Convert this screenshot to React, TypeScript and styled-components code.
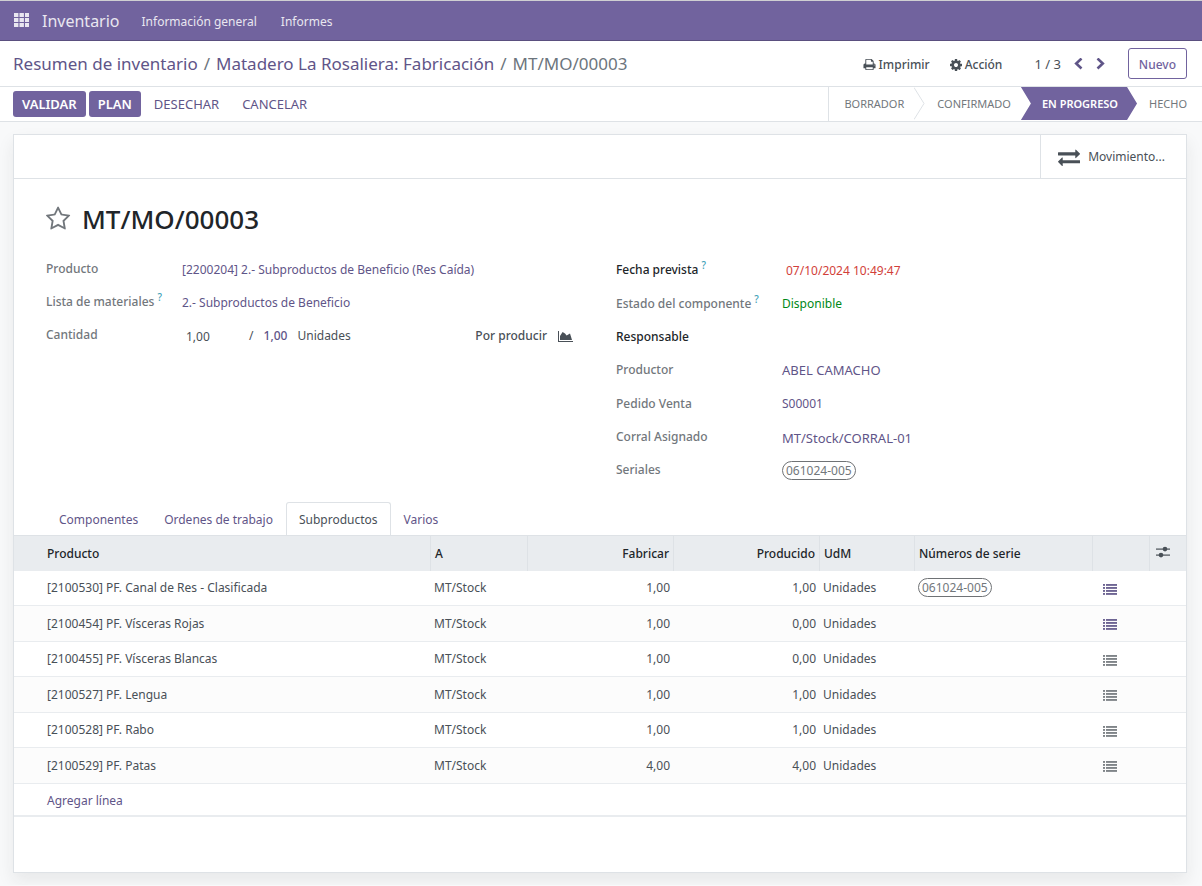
import React, { useState } from "react";
import styled, { createGlobalStyle, css } from "styled-components";

const color = {
  brand: "#71639e",
  brandDark: "#5a4f7f",
  link: "#5f5588",
  text: "#495057",
  dark: "#212529",
  muted: "#72777c",
  line: "#dee2e6",
  head: "#e9ecef",
  page: "#f8f9fa",
};

const GlobalStyle = createGlobalStyle`
  * { box-sizing: border-box; }
  html, body { margin: 0; min-height: 100%; background: ${color.page}; }
  body {
    font-family: "Noto Sans", "Open Sans", sans-serif;
    font-size: 12px;
    line-height: 20px;
    color: ${color.text};
  }
  button, input { font: inherit; color: inherit; }
  button { background: none; border: 0; padding: 0; cursor: pointer; white-space: nowrap; }
  a { color: ${color.link}; text-decoration: none; }
`;

/* ---------- icons ---------- */

const Glyph = styled.svg<{ $w?: number; $h?: number }>`
  display: block;
  flex: none;
  width: ${(p) => p.$w ?? 14}px;
  height: ${(p) => p.$h ?? p.$w ?? 14}px;
  fill: currentColor;
`;

const AppsIcon = () => (
  <Glyph $w={15} $h={14} viewBox="0 0 15 14" aria-hidden="true">
    {[0, 5, 10].map((y) =>
      [0, 5.5, 11].map((x) => <rect key={`${x}-${y}`} x={x} y={y} width="4.4" height="4" />)
    )}
  </Glyph>
);

const PrintIcon = () => (
  <Glyph $w={13} viewBox="0 0 1792 1792" aria-hidden="true">
    <path d="M448 1536h896v-256h-896v256zm0-640h896v-384h-160q-40 0-68-28t-28-68v-160h-640v640zm1152 64q0-26-19-45t-45-19-45 19-19 45 19 45 45 19 45-19 19-45zm128 0v416q0 13-9.5 22.5t-22.5 9.5h-224v160q0 40-28 68t-68 28h-960q-40 0-68-28t-28-68v-160h-224q-13 0-22.5-9.5t-9.5-22.5v-416q0-79 56.5-135.5t135.5-56.5h64v-544q0-40 28-68t68-28h672q40 0 88 20t76 48l152 152q28 28 48 76t20 88v256h64q79 0 135.5 56.5t56.5 135.5z" />
  </Glyph>
);

const CogIcon = () => (
  <Glyph $w={12} viewBox="128 128 1536 1536" aria-hidden="true">
    <path d="M1152 896q0-106-75-181t-181-75-181 75-75 181 75 181 181 75 181-75 75-181zm512-109v222q0 12-8 23t-20 13l-185 28q-19 54-39 91 35 50 107 138 10 12 10 25t-9 23q-27 37-99 108t-94 71q-12 0-26-9l-138-108q-44 23-91 38-16 136-29 186-7 28-36 28h-222q-14 0-24.5-8.5t-11.5-21.5l-28-184q-49-16-90-37l-141 107q-10 9-25 9-14 0-25-11-126-114-165-168-7-10-7-23 0-12 8-23 15-21 51-66.5t54-70.5q-27-50-41-99l-183-27q-13-2-21-12.5t-8-23.5v-222q0-12 8-23t19-13l186-28q14-46 39-92-40-57-107-138-10-12-10-24 0-10 9-23 26-36 98.5-107.5t94.5-71.5q13 0 26 10l138 107q44-23 91-38 16-136 29-186 7-28 36-28h222q14 0 24.5 8.5t11.5 21.5l28 184q49 16 90 37l142-107q9-9 24-9 13 0 25 10 129 119 165 170 7 8 7 22 0 12-8 23-15 21-51 66.5t-54 70.5q26 50 41 98l183 28q13 2 21 12.5t8 23.5z" />
  </Glyph>
);

const ChevronIcon = ({ right }: { right?: boolean }) => (
  <Glyph $w={9} $h={12} viewBox="0 0 9 12" aria-hidden="true">
    <path
      d={right ? "M1.5 0.5 L6.8 5.5 L1.5 10.5" : "M7.5 0.5 L2.2 5.5 L7.5 10.5"}
      fill="none"
      stroke="currentColor"
      strokeWidth="2.6"
    />
  </Glyph>
);

const ExchangeIcon = () => (
  <Glyph $w={22} viewBox="0 0 1792 1792" aria-hidden="true">
    <path d="M1792 1184v192q0 13-9.5 22.5t-22.5 9.5h-1376v192q0 13-9.5 22.5t-22.5 9.5q-12 0-24-10l-319-320q-9-9-9-22 0-14 9-23l320-320q9-9 23-9 13 0 22.5 9.5t9.5 22.5v192h1376q13 0 22.5 9.5t9.5 22.5zm0-544q0 14-9 23l-320 320q-9 9-23 9-13 0-22.5-9.5t-9.5-22.5v-192h-1376q-13 0-22.5-9.5t-9.5-22.5v-192q0-13 9.5-22.5t22.5-9.5h1376v-192q0-14 9-23t23-9q12 0 24 10l319 319q9 9 9 23z" />
  </Glyph>
);

const StarIcon = () => (
  <Glyph $w={26} viewBox="64 0 1792 1792" aria-hidden="true">
    <path d="M1201 1004l306-297-422-62-189-382-189 382-422 62 306 297-73 421 378-199 377 199zm527-357q0 22-26 48l-363 354 86 500q1 7 1 20 0 50-41 50-19 0-40-12l-449-236-449 236q-22 12-40 12-21 0-31.5-14.5t-10.5-35.5q0-6 2-20l86-500-364-354q-25-27-25-48 0-37 56-46l502-73 225-455q19-41 49-41t49 41l225 455 502 73q56 9 56 46z" />
  </Glyph>
);

const ForecastIcon = () => (
  <Glyph $w={15} $h={12} viewBox="0 0 15 12" aria-hidden="true">
    <path d="M0 1h1v10h14v1H0z M2 10V6l2.6-4 2.4 1.6L8.6 5.6 12 3.4 14 10z" />
  </Glyph>
);

const ListIcon = () => (
  <Glyph $w={14} $h={11} viewBox="0 0 14 11" aria-hidden="true">
    {[0, 3, 6, 9].map((y) => (
      <React.Fragment key={y}>
        <rect x="0" y={y + 0.1} width="2" height="1.7" />
        <rect x="3" y={y + 0.1} width="11" height="1.7" />
      </React.Fragment>
    ))}
  </Glyph>
);

const SlidersIcon = () => (
  <Glyph $w={14} $h={12} viewBox="0 0 14 12" aria-hidden="true">
    <rect y="2.5" width="14" height="1.2" />
    <rect y="8.5" width="14" height="1.2" />
    <circle cx="9" cy="3.1" r="2.3" />
    <circle cx="5" cy="9.1" r="2.3" />
  </Glyph>
);

/* ---------- top bars ---------- */

const Navbar = styled.nav`
  display: flex;
  align-items: center;
  height: 41px;
  padding: 0 14px;
  background: ${color.brand};
  border-top: 1px solid #cfcfd2;
  border-bottom: 1px solid ${color.brandDark};
  color: #e9e7f0;
`;

const NavButton = styled.button`
  margin-right: 13px;
  padding-bottom: 2px;
`;

const AppName = styled.a`
  margin-right: 22px;
  font-size: 16px;
  color: inherit;
`;

const NavLink = styled.a`
  margin-right: 24px;
  padding-top: 2px;
  color: inherit;
`;

const ControlPanel = styled.header`
  display: flex;
  align-items: center;
  justify-content: space-between;
  height: 46px;
  padding: 0 15px 0 13px;
  background: #fff;
  border-bottom: 1px solid ${color.line};
`;

const Breadcrumb = styled.ol`
  display: flex;
  margin: 0;
  padding: 0;
  list-style: none;
  font-size: 17px;
  line-height: 24px;
  white-space: nowrap;
  color: #6c757d;

  li + li::before {
    content: "/";
    padding: 0 6px;
  }
`;

const PanelTools = styled.div`
  display: flex;
  align-items: center;
`;

const ToolButton = styled.button`
  display: flex;
  align-items: center;
  gap: 3px;
  margin-right: 20px;
  padding-top: 2px;
  font-weight: 500;
`;

const Pager = styled.div`
  display: flex;
  align-items: center;
  margin: 0 23px 0 12px;
  font-size: 13px;
`;

const PagerButton = styled.button`
  margin-left: 13px;
  color: ${color.link};
`;

const NewButton = styled.button`
  height: 31px;
  padding: 2px 10px 0;
  border: 1px solid ${color.brand};
  border-radius: 3px;
  font-weight: 500;
  color: ${color.brand};
`;

const StatusBar = styled.section`
  display: flex;
  align-items: center;
  justify-content: space-between;
  height: 35px;
  padding-left: 13px;
  background: #fff;
  border-bottom: 1px solid ${color.line};
`;

const Actions = styled.div`
  display: flex;
  gap: 3px;
`;

const ActionButton = styled.button<{ $primary?: boolean }>`
  height: 26px;
  padding: 0 10px;
  border-radius: 3px;
  font-size: 13px;
  text-transform: uppercase;
  color: ${color.link};
  ${(p) =>
    p.$primary &&
    css`
      padding: 0 9px;
      background: ${color.brand};
      color: #fff;
      font-weight: 600;
    `}
`;

const Steps = styled.div`
  display: flex;
  align-self: stretch;
  border-left: 1px solid ${color.line};
`;

const Step = styled.button<{ $current?: boolean }>`
  height: 33px;
  padding: 0 10px 0 12px;
  font-size: 11px;
  text-transform: uppercase;
  color: ${color.muted};
  &:first-child { padding-left: 15px; }
  &:last-child { padding-right: 15px; }
  ${(p) =>
    p.$current &&
    css`
      padding: 0 19px 0 21px;
      background: ${color.brand};
      color: #fff;
      font-weight: 600;
      clip-path: polygon(0 0, calc(100% - 10px) 0, 100% 50%, calc(100% - 10px) 100%, 0 100%, 10px 50%);
    `}
`;

const StepEdge = () => (
  <Glyph $w={11} $h={33} viewBox="0 0 11 33" aria-hidden="true">
    <path d="M0 0.5 L10 16.5 L0 32.5" fill="none" stroke={color.line} />
  </Glyph>
);

/* ---------- sheet ---------- */

const Sheet = styled.main`
  margin: 12px 15px 12px 13px;
  padding-bottom: 55px;
  background: #fff;
  border: 1px solid ${color.line};
  box-shadow: 0 8px 16px rgba(33, 37, 41, 0.08);
`;

const ButtonBox = styled.div`
  display: flex;
  justify-content: flex-end;
  height: 44px;
  border-bottom: 1px solid ${color.line};
`;

const StatButton = styled.button`
  display: flex;
  align-items: center;
  gap: 8px;
  padding: 0 21px 0 17px;
  border-left: 1px solid ${color.line};
`;

const TitleRow = styled.div`
  display: flex;
  align-items: center;
  gap: 10px;
  padding: 23px 32px 17px;
  color: ${color.muted};
`;

const Title = styled.h1`
  margin: 0;
  font-size: 26px;
  line-height: 34px;
  font-weight: 500;
  color: ${color.dark};
`;

const Groups = styled.div`
  display: grid;
  grid-template-columns: 1fr 1fr;
  column-gap: 32px;
  padding: 0 32px 15px;
`;

const Field = styled.div<{ $h?: number }>`
  display: grid;
  grid-template-columns: ${(p) => (p.$h ? "166px" : "136px")} 1fr;
  align-items: center;
  min-height: ${(p) => p.$h ?? 33}px;
`;

const FieldLabel = styled.label<{ $strong?: boolean }>`
  padding-bottom: 1px;
  font-weight: 500;
  white-space: nowrap;
  color: ${(p) => (p.$strong ? color.dark : color.muted)};
`;

const Help = styled.sup`
  margin-left: 3px;
  font-size: 10px;
  line-height: 0;
  color: #3fa2b8;
`;

const WideLink = styled.a`
  font-size: 13px;
`;

const Quantity = styled.div`
  display: flex;
  align-items: center;
`;

const QtyInput = styled.input`
  width: 64px;
  padding: 2px 4px 0;
  border: 0;
  background: none;
`;

const QtyTotal = styled.a`
  margin: 0 10px;
  font-weight: 500;
`;

const ForecastButton = styled.button`
  display: flex;
  align-items: center;
  gap: 11px;
  margin-left: auto;
  margin-right: 11px;
  font-weight: 500;
`;

const DateInput = styled.input`
  width: 100%;
  padding: 2px 4px 0;
  border: 0;
  background: none;
  color: #d23f3a;
`;

const Available = styled.span`
  color: #008818;
`;

const Tag = styled.span`
  display: inline-block;
  height: 19px;
  padding: 0 3px;
  border: 1px solid #6f7275;
  border-radius: 10px;
  line-height: 17px;
  color: ${color.muted};
`;

const Tabs = styled.div`
  display: flex;
  padding: 0 32px;
`;

const Tab = styled.button<{ $active: boolean }>`
  height: 33px;
  padding: 2px 12px 0;
  border: 1px solid transparent;
  border-bottom: 0;
  border-radius: 3px 3px 0 0;
  color: ${color.link};
  ${(p) =>
    p.$active &&
    css`
      background: #fff;
      border-color: ${color.line};
      color: ${color.text};
    `}
`;

const Lines = styled.table`
  width: 100%;
  table-layout: fixed;
  border-collapse: separate;
  border-spacing: 0;
  border-bottom: 2px solid ${color.head};
`;

const Th = styled.th<{ $w?: number; $right?: boolean }>`
  width: ${(p) => (p.$w ? `${p.$w}px` : "auto")};
  height: 36px;
  padding: 0 4px;
  background: ${color.head};
  border-top: 1px solid ${color.line};
  border-right: 1px solid ${color.line};
  font-weight: 500;
  text-align: ${(p) => (p.$right ? "right" : "left")};
  white-space: nowrap;
  color: ${color.dark};

  &:first-child { padding-left: 33px; }
  &:last-child { padding-left: 6px; border-right: 0; color: ${color.text}; }
`;

const Row = styled.tr`
  height: 35px;
  background: #fff;
  &:nth-child(even) { height: 36px; background: #fcfcfc; }
`;

const Td = styled.td<{ $right?: boolean }>`
  padding: 0 4px 0 3px;
  border-bottom: 1px solid ${color.head};
  text-align: ${(p) => (p.$right ? "right" : "left")};
  white-space: nowrap;

  &:first-child { padding-left: 33px; }
`;

const AddCell = styled.td`
  height: 31px;
  padding: 2px 33px 0;
`;

const DetailButton = styled.button<{ $active: boolean }>`
  display: block;
  margin: 2px 0 0 7px;
  color: ${(p) => (p.$active ? color.link : color.muted)};
`;

type Line = { name: string; done: string; qty: string; lot?: string; detailed?: boolean };

const lines: Line[] = [
  { name: "[2100530] PF. Canal de Res - Clasificada", qty: "1,00", done: "1,00", lot: "061024-005", detailed: true },
  { name: "[2100454] PF. Vísceras Rojas", qty: "1,00", done: "0,00", detailed: true },
  { name: "[2100455] PF. Vísceras Blancas", qty: "1,00", done: "0,00" },
  { name: "[2100527] PF. Lengua", qty: "1,00", done: "1,00" },
  { name: "[2100528] PF. Rabo", qty: "1,00", done: "1,00" },
  { name: "[2100529] PF. Patas", qty: "4,00", done: "4,00" },
];

const tabs = ["Componentes", "Ordenes de trabajo", "Subproductos", "Varios"];

export default function App() {
  const [tab, setTab] = useState("Subproductos");

  return (
    <>
      <GlobalStyle />
      <Navbar>
        <NavButton aria-label="Aplicaciones"><AppsIcon /></NavButton>
        <AppName href="#">Inventario</AppName>
        <NavLink href="#">Información general</NavLink>
        <NavLink href="#">Informes</NavLink>
      </Navbar>

      <ControlPanel>
        <Breadcrumb>
          <li><a href="#">Resumen de inventario</a></li>
          <li><a href="#">Matadero La Rosaliera: Fabricación</a></li>
          <li>MT/MO/00003</li>
        </Breadcrumb>
        <PanelTools>
          <ToolButton><PrintIcon />Imprimir</ToolButton>
          <ToolButton><CogIcon />Acción</ToolButton>
          <Pager>
            <span>1 / 3</span>
            <PagerButton aria-label="Anterior"><ChevronIcon /></PagerButton>
            <PagerButton aria-label="Siguiente"><ChevronIcon right /></PagerButton>
          </Pager>
          <NewButton>Nuevo</NewButton>
        </PanelTools>
      </ControlPanel>

      <StatusBar>
        <Actions>
          <ActionButton $primary>Validar</ActionButton>
          <ActionButton $primary>Plan</ActionButton>
          <ActionButton>Desechar</ActionButton>
          <ActionButton>Cancelar</ActionButton>
        </Actions>
        <Steps>
          <Step>Borrador</Step>
          <StepEdge />
          <Step>Confirmado</Step>
          <Step $current aria-current="step">En progreso</Step>
          <Step>Hecho</Step>
        </Steps>
      </StatusBar>

      <Sheet>
        <ButtonBox>
          <StatButton><ExchangeIcon />Movimiento...</StatButton>
        </ButtonBox>

        <TitleRow>
          <button aria-label="Favorito"><StarIcon /></button>
          <Title>MT/MO/00003</Title>
        </TitleRow>

        <Groups>
          <div>
            <Field>
              <FieldLabel as="span">Producto</FieldLabel>
              <a href="#">[2200204] 2.- Subproductos de Beneficio (Res Caída)</a>
            </Field>
            <Field>
              <FieldLabel as="span">Lista de materiales<Help>?</Help></FieldLabel>
              <a href="#">2.- Subproductos de Beneficio</a>
            </Field>
            <Field>
              <FieldLabel htmlFor="qty">Cantidad</FieldLabel>
              <Quantity>
                <QtyInput id="qty" defaultValue="1,00" />
                <span>&nbsp;/</span>
                <QtyTotal href="#">1,00</QtyTotal>
                <span>Unidades</span>
                <ForecastButton>Por producir<ForecastIcon /></ForecastButton>
              </Quantity>
            </Field>
          </div>
          <div>
            <Field $h={34}>
              <FieldLabel htmlFor="date" $strong>Fecha prevista<Help>?</Help></FieldLabel>
              <DateInput id="date" defaultValue="07/10/2024 10:49:47" />
            </Field>
            <Field $h={34}>
              <FieldLabel as="span">Estado del componente<Help>?</Help></FieldLabel>
              <Available>Disponible</Available>
            </Field>
            <Field $h={32}>
              <FieldLabel as="span" $strong>Responsable</FieldLabel>
            </Field>
            <Field $h={34}>
              <FieldLabel as="span">Productor</FieldLabel>
              <WideLink href="#">ABEL CAMACHO</WideLink>
            </Field>
            <Field $h={34}>
              <FieldLabel as="span">Pedido Venta</FieldLabel>
              <a href="#">S00001</a>
            </Field>
            <Field $h={33}>
              <FieldLabel as="span">Corral Asignado</FieldLabel>
              <WideLink href="#">MT/Stock/CORRAL-01</WideLink>
            </Field>
            <Field $h={33}>
              <FieldLabel as="span">Seriales</FieldLabel>
              <div><Tag>061024-005</Tag></div>
            </Field>
          </div>
        </Groups>

        <Tabs role="tablist">
          {tabs.map((name) => (
            <Tab key={name} role="tab" aria-selected={tab === name} $active={tab === name} onClick={() => setTab(name)}>
              {name}
            </Tab>
          ))}
        </Tabs>

        <Lines>
          <thead>
            <tr>
              <Th>Producto</Th>
              <Th $w={97}>A</Th>
              <Th $w={146} $right>Fabricar</Th>
              <Th $w={146} $right>Producido</Th>
              <Th $w={95}>UdM</Th>
              <Th $w={178}>Números de serie</Th>
              <Th $w={57} />
              <Th $w={36}><button aria-label="Columnas opcionales"><SlidersIcon /></button></Th>
            </tr>
          </thead>
          <tbody>
            {lines.map((line) => (
              <Row key={line.name}>
                <Td>{line.name}</Td>
                <Td>MT/Stock</Td>
                <Td $right>{line.qty}</Td>
                <Td $right>{line.done}</Td>
                <Td>Unidades</Td>
                <Td>{line.lot && <Tag>{line.lot}</Tag>}</Td>
                <Td>
                  <DetailButton $active={!!line.detailed} aria-label="Operaciones detalladas"><ListIcon /></DetailButton>
                </Td>
                <Td />
              </Row>
            ))}
            <tr>
              <AddCell colSpan={8}><a href="#">Agregar línea</a></AddCell>
            </tr>
          </tbody>
        </Lines>
      </Sheet>
    </>
  );
}
